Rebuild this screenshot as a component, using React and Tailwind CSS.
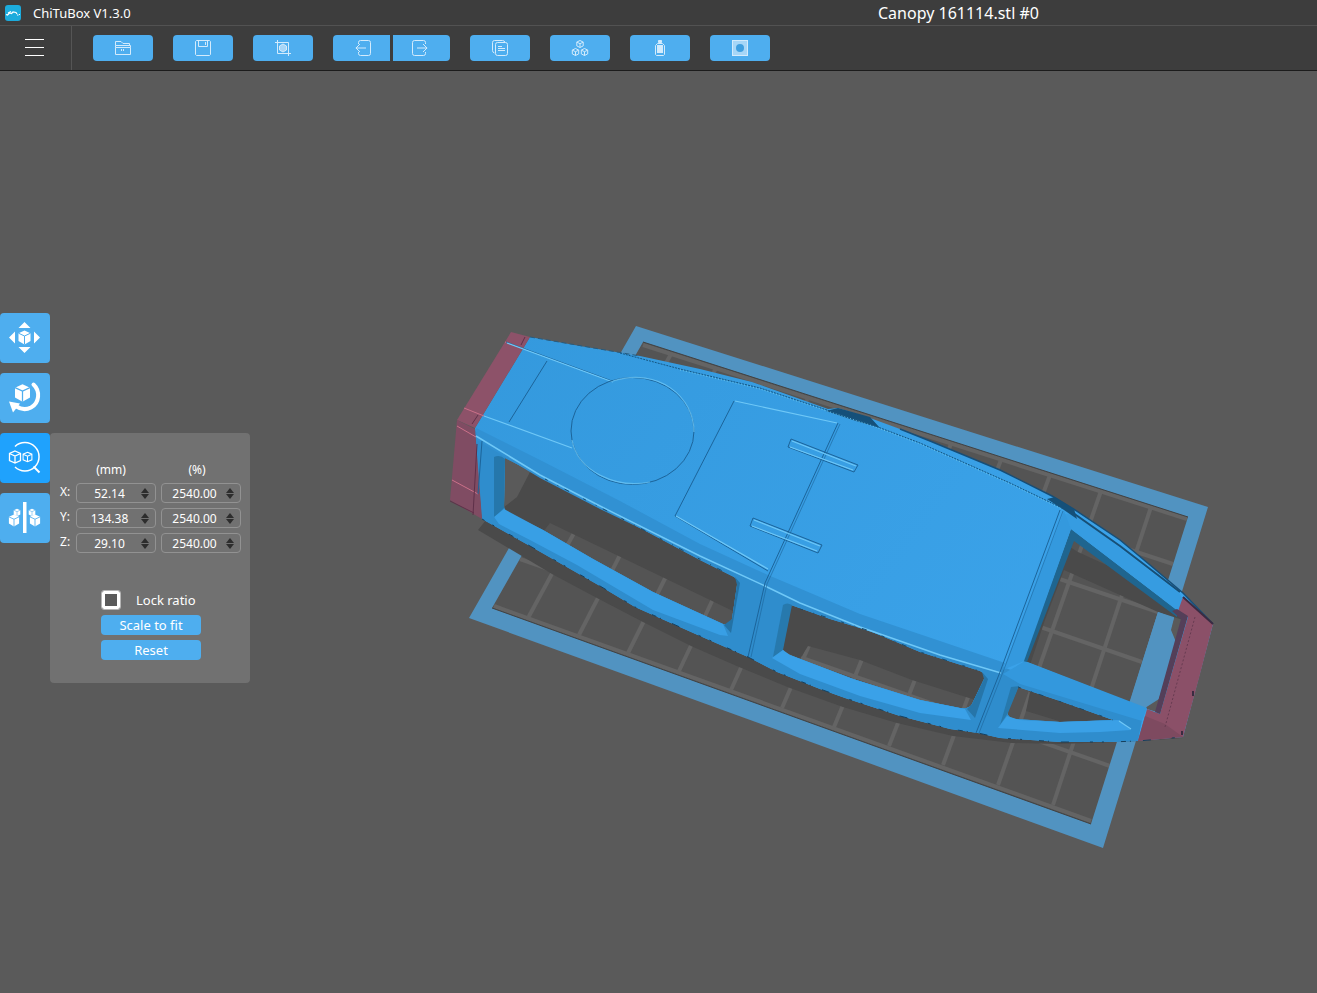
import React, { useState } from "react";

const line = { fill: "none", stroke: "#d3ebfc", strokeWidth: 1 };

function FolderIcon() {
  return (
    <svg width="18" height="16" viewBox="0 0 18 16" {...line} aria-hidden="true">
      <path d="M1.500 5.500V1.500H7l2 2h6.500v2M1.500 7.500V5.500h15v2M1.500 7.500v7h15v-7zM7.500 9v2M9.500 9v2" />
    </svg>
  );
}
function SaveIcon() {
  return (
    <svg width="16" height="16" viewBox="0 0 16 16" {...line} aria-hidden="true">
      <path d="M1.500 .5h13l1 1v13l-1 1h-13l-1-1v-13zM3.500 .5v6h9v-6M10.500 2v3" />
    </svg>
  );
}
function CropIcon() {
  return (
    <svg width="16" height="16" viewBox="0 0 16 16" {...line} aria-hidden="true">
      <path d="M0 2.500h13.500V16M2.500 0v13.500H16" />
      <path d="M8 4l3.500 2v4L8 12l-3.500-2V6z" fill="#a8d6f7" />
    </svg>
  );
}
function UndoIcon() {
  return (
    <svg width="16" height="16" viewBox="0 0 16 16" {...line} aria-hidden="true">
      <path d="M3.500 4V2.500q0-2 2-2h8q2 0 2 2v11q0 2-2 2h-8q-2 0-2-2V12M11 8H.8M5 4L1 8l4 4" />
    </svg>
  );
}
function RedoIcon() {
  return (
    <svg width="16" height="16" viewBox="0 0 16 16" {...line} aria-hidden="true">
      <path d="M13.500 4V2.500q0-2-2-2h-9q-2 0-2 2v11q0 2 2 2h9q2 0 2-2V12M5 8h10.200M11 4l4 4-4 4" />
    </svg>
  );
}
function CopyIcon() {
  return (
    <svg width="16" height="16" viewBox="0 0 16 16" {...line} aria-hidden="true">
      <rect x="3.500" y="2.500" width="12" height="13" rx="2" />
      <path d="M2.500 13Q.5 12.500 .5 10.500v-8q0-2 2-2h8q2 0 2.500 2M6 6.500h4M6 8.500h7M6 10.500h7" />
    </svg>
  );
}
function CubesIcon() {
  const c = "M0-3.500L3.200-1.900V1.900L0 3.500-3.200 1.900V-1.900zM-3.200-1.900L0-.3 3.200-1.900M0-.3V3.500";
  return (
    <svg width="18" height="16" viewBox="0 0 18 16" {...line} aria-hidden="true">
      <path d={c} transform="translate(9 4)" />
      <path d={c} transform="translate(4.500 12)" />
      <path d={c} transform="translate(13.500 12)" />
    </svg>
  );
}
function BottleIcon() {
  return (
    <svg width="12" height="16" viewBox="0 0 12 16" {...line} aria-hidden="true">
      <path d="M4.500 .5h3v2h-3z" fill="#d3ebfc" />
      <path d="M3.500 3.500h5l2 2v9l-1 1h-7l-1-1v-9z" />
      <path d="M3 5h6v8H3z" fill="#d3ebfc" stroke="none" />
    </svg>
  );
}
function DiscIcon() {
  return (
    <svg width="16" height="16" viewBox="0 0 16 16" aria-hidden="true">
      <rect x=".5" y=".5" width="15" height="15" fill="#a6d6f7" stroke="#d3ebfc" />
      <circle cx="8" cy="8" r="4" fill="#3f9fe0" />
    </svg>
  );
}

function ToolButton({ label, shape, children }) {
  return (
    <button type="button" aria-label={label} className={`flex h-[26px] items-center justify-center bg-[#4eaeef] ${shape}`}>
      {children}
    </button>
  );
}

function SolidCube({ x, y, s = 1 }) {
  return (
    <g transform={`translate(${x} ${y}) scale(${s})`}>
      <path d="M0-7L6-4.300V3.600L0 7-6 3.600V-4.300z" fill="#fff" />
      <path d="M-6-4.300L0-1.500 6-4.300M0-1.500V7" fill="none" stroke="#4eaeef" strokeWidth="1" />
    </g>
  );
}
function WireCube({ x, y, s = 1 }) {
  return (
    <path
      transform={`translate(${x} ${y}) scale(${s})`}
      d="M0-6L5.500-3.500V3.500L0 6-5.500 3.500V-3.500zM-5.500-3.500L0-1 5.500-3.500M0-1V6"
      fill="none"
      stroke="#fff"
      strokeWidth="1.300"
    />
  );
}
function MoveIcon() {
  return (
    <svg width="50" height="50" viewBox="0 0 50 50" aria-hidden="true">
      <path d="M24.500 9l6 6h-12zM24.500 40l6-6h-12zM9 24.500l6-6v12zM40 24.500l-6-6v12z" fill="#fff" />
      <SolidCube x={24.500} y={24.500} />
    </svg>
  );
}
function RotateIcon() {
  return (
    <svg width="50" height="50" viewBox="0 0 50 50" aria-hidden="true">
      <path d="M33.500 11.500C40.500 18 39.500 30 31 34.500c-5 2.500-10 2-14.500-1" fill="none" stroke="#fff" strokeWidth="4" strokeLinecap="round" />
      <path d="M9 28.500l11 2-7 9z" fill="#fff" />
      <SolidCube x={22.500} y={20} s={1.250} />
    </svg>
  );
}
function ScaleIcon() {
  return (
    <svg width="50" height="50" viewBox="0 0 50 50" aria-hidden="true">
      <path d="M15 13.500a14.200 14.200 0 1 1 0 20.500" fill="none" stroke="#fff" strokeWidth="1.500" />
      <path d="M33.500 33.500l6 6" stroke="#fff" strokeWidth="2" />
      <WireCube x={15} y={24} />
      <WireCube x={27.500} y={24} s={0.800} />
    </svg>
  );
}
function MirrorIcon() {
  return (
    <svg width="50" height="50" viewBox="0 0 50 50" aria-hidden="true">
      <rect x="23" y="9" width="3.500" height="31" fill="#fff" />
      <SolidCube x={17} y={19.500} s={0.550} />
      <SolidCube x={32} y={19.500} s={0.550} />
      <SolidCube x={14} y={27.500} s={0.850} />
      <SolidCube x={35} y={27.500} s={0.850} />
    </svg>
  );
}

const columns = [
  [671, 354, 528, 618], [716, 368, 579, 635], [762, 383, 628, 653], [808, 398, 679, 671],
  [855, 413, 731, 690], [903, 428, 782, 708], [951, 444, 834, 727], [1001, 460, 889, 746],
  [1050, 475, 943, 765], [1101, 491, 998, 785], [1151, 507, 1053, 805],
];
const rows = [
  [643, 345, 1187, 519], [620, 382, 1173, 564], [597, 424, 1158, 612], [572, 466, 1142, 662],
  [547, 512, 1126, 713], [520, 559, 1110, 766], [494, 606, 1091, 821],
];

const windowA = "M505 458L560 486L640 528L700 560L734 577Q738 580 737 585L732 619Q731 626 723 624L653 592L593 559L543 530L508 513Q504 510 504 506z";
const windowB = "M791 605L830 619L870 631L920 652L980 671Q986 674 984 679L972 704Q970 709 960 708L920 700L853 679L787 654Q782 652 783 646z";
const windowC = "M1018 687L1060 701L1113 720L1060 722L1015 719Q1006 717 1008 711z";
const windowD = "M1071 530L1178 611L1187 617L1160 713L1147 709L1024 661z";
const sideWindows = windowA + windowB + windowC;
const hull =
  "M530 337L580 346L640 356L700 369L752 382L828 409L838 408L870 418L900 429L930 441L1000 470L1052 496L1075 510L1120 540L1150 565L1183 593L1213 624L1183 737L1138 741L1110 742L1060 742L1000 738L978 733L950 729L900 716L845 698L820 689L777 672L748 657L700 636L635 607L600 586L530 546L482 519L475 428z";
const sideFace =
  "M475 431L540 468L620 509L700 552L765 583L860 622L940 649L1003 667L1142 720L1138 741L1110 742L1060 742L1000 738L978 733L950 729L900 716L845 698L820 689L777 672L748 657L700 636L635 607L600 586L530 546L482 519z";

function Scene() {
  const dark = { fill: "none", stroke: "#1c649a", strokeWidth: 1 };
  const glow = { fill: "none", stroke: "#6fc8f7", strokeWidth: 1.2 };
  return (
    <svg className="absolute inset-0 h-full w-full" viewBox="0 71 1317 922" role="img" aria-label="Canopy model on the build plate">
      <defs>
        <linearGradient id="roof" x1="0" y1="0" x2="1" y2=".4">
          <stop offset="0" stopColor="#3499dd" />
          <stop offset="1" stopColor="#3ba3ea" />
        </linearGradient>
        <clipPath id="plate"><path d="M643 342L1188 517L1091 824L492 608z" /></clipPath>
      </defs>

      <path d="M643 342L1188 517L1091 824L492 608z" fill="#545454" />
      <g stroke="#646464" strokeWidth="4" clipPath="url(#plate)">
        {[...columns, ...rows].map(([a, b, c, d]) => <path key={`${a}-${b}`} d={`M${a} ${b}L${c} ${d}`} />)}
      </g>
      <path fillRule="evenodd" fill="#5193c1" d="M636 326L1208 507L1103 848L469 618zM643 342L492 608L1091 824L1188 517z" />
      <path d="M492 608L1091 824M643 342L1188 517" stroke="#424242" strokeWidth="1" />

      <path fill="#4a4a4a" d="M490 515L478 530L552 574L597 598L643 622L691 646L739 667L790 688L843 707L897 723L953 736L1012 743L1060 744L1140 741L1183 738L1140 733L1060 736L1000 732L975 722L860 697L775 664L728 644L640 604L560 556z" />
      <path fill="#4a4a4a" d="M530 472L517 497L504 507L504 518L543 532L550 523L735 612L745 590L735 570L600 500z" />
      <path fill="#4a4a4a" d="M788 600L780 650L800 659L808 646L860 660L912 680L985 703L990 672L900 640z" />
      <path fill="#4a4a4a" d="M1018 685L1030 692L1026 711L1062 722L1116 722L1080 705z" />
      <path fill="#4a4a4a" d="M1070 547L1078 552L1135 578L1183 620L1158 612L1064 570L1045 620L1030 665L1020 661L1060 560z" />
      <path fill="#5193c1" d="M1158 612L1174 618L1171 630L1176 642L1159 699L1145 708L1130 702z" />

      <path fill="url(#roof)" fillRule="evenodd" d={hull + sideWindows + windowD} />
      <path fill="#2f8dcd" fillRule="evenodd" d={sideFace + sideWindows} />
      <path fill="#3191d3" d="M476 428L540 460L620 501L700 544L768 575L860 614L940 641L1005 663L1001 673L940 656L860 628L765 587L700 557L600 509L540 478L477 440z" />

      <path fill="#3398dd" d="M1025 661L1147 708L1142 721L1020 684L1003 674z" />
      <path fill="#1f658f" d="M1071 529L1178 611L1177 617L1074 541L1027 662L1023 661z" />
      <path fill="#2577ab" d="M494 457Q500 454 505 459L504 508L494 518z" />
      <path fill="#389fe5" d="M494 517L504 509L543 530L593 559L653 592L723 624L728 636L720 635L653 610L577 565L530 540L499 524z" />
      <path fill="#2472a5" d="M735 577L740 583L731 633L724 625L732 619L737 585z" />
      <path fill="#2779ad" d="M783 605Q787 602 792 605L783 650L773 657z" />
      <path fill="#3aa1e8" d="M772 658L783 650L790 655L853 679L920 700L965 709L971 720L920 713L860 696L800 674z" />
      <path fill="#2675a9" d="M982 672L988 679L975 718L967 709L972 704L984 679z" />
      <path fill="#2779ad" d="M1011 687L1019 686L1008 713L1000 725z" />
      <path fill="#3aa0e6" d="M998 728L1007 716L1020 720L1060 722L1119 720L1131 730L1100 732L1060 733z" />
      <path {...glow} d="M1119 721L1131 729" />

      <path fill="#369ce1" d="M1077 515L1180 594L1183 601L1178 611L1071 529L1064 514z" />
      <path fill="#3499de" d="M1064 511L1071 529L1024 661L1003 670z" />
      <path d="M1066 508L1120 546L1180 592" fill="none" stroke="#174f76" strokeWidth="2" />
      <path d="M900 429L930 441L1000 470L1052 496L1075 510L1120 540L1150 565L1183 593L1213 624" fill="none" stroke="#174e77" strokeWidth="1.500" />
      <path fill="#155079" d="M826 411L838 408L870 417L880 428L856 421zM1047 499L1055 497L1074 509L1077 519L1064 510z" />

      <path fill="#8d5269" d="M511 332L530 337L475 428L457 420z" />
      <path fill="#804c63" d="M457 420L475 429L482 519L450 500z" />
      <path fill="#8b5068" d="M1183 597L1213 624L1199 678L1183 737L1138 741L1147 709L1160 714L1188 617L1178 611z" />
      <path fill="#7e4a60" d="M1138 741L1145 716L1165 724L1183 737z" />
      <path fill="#543f59" d="M1177 609L1188 616L1160 714L1155 712L1181 619L1172 611z" />
      <path d="M505 342L525 349M464 408L484 416M457 426L476 437M452 480L478 494" stroke="#cb7089" strokeWidth="1" />
      <path d="M525 337L521 345M478 415L472 424M477 444L473 515M450 501L474 513" stroke="#5e3049" strokeWidth="1" />
      <path d="M1195 617L1165 727" stroke="#673b51" strokeDasharray="2 2" />
      <path d="M1183 597L1213 624M1193 691v5M1182 731v4" stroke="#3b2b41" strokeWidth="2" />

      <path d="M530 337L640 356" stroke="#265c80" strokeDasharray="5 3" fill="none" />
      <path d="M620 353L680 369L760 388L830 411L870 424L920 443L1010 483L1062 508" fill="none" stroke="#155783" strokeDasharray="2 1" />
      <path d="M680 370L760 389L830 412L870 425L920 444L1010 484L1062 509" fill="none" stroke="#68c3e9" strokeDasharray="1 2" />
      <path {...glow} strokeWidth="1.500" d="M476 436L540 475L600 506L700 556L765 586L800 603L860 627L940 655L1001 673" />
      <path {...dark} d="M506 342L612 381M547 361L509 422M734 401L675 516L768 571" />
      <path {...glow} d="M507 343L613 382M484 416L572 448M735 401L837 423M676 516L768 569" />
      <path {...dark} d="M838 423L765 583L748 657M1060 510L1000 672L976 733M482 441L478 494" />
      <path {...dark} opacity=".6" d="M840 424L767 584L751 657M1063 511L1003 672L979 733" />
      <ellipse cx="632.500" cy="431" rx="61.500" ry="53.500" {...dark} />
      <path {...glow} opacity=".75" d="M613 381C659 367 694 397 694 432M572 440C578 472 617 489 650 482" />
      <path {...dark} d="M791 439L858 465L854 472L788 447zM753 518L822 545L818 553L750 526z" />
      <path {...glow} d="M792 441L856 466M790 447L853 470M754 520L820 546M752 526L817 551" />
      <path d="M482 519L530 546L600 586L635 607L700 636L748 657L777 672L820 689L845 698L900 716L950 729L978 733L1000 738L1060 742L1110 742L1138 741L1183 737" fill="none" stroke="#173f5b" strokeWidth="1" strokeDasharray="3 9 2 17 5 4 1 12 8 21" />
      <path d="M545 479L640 528L734 577M800 609L870 631L920 652L980 671M1018 687L1113 720" fill="none" stroke="#184b6d" strokeDasharray="3 11 1 7 5 16" />
    </svg>
  );
}

function SpinField({ label, initial }) {
  const [value, setValue] = useState(initial);
  const step = (d) => setValue((v) => (Number(v) + d).toFixed(2));
  return (
    <div className="flex h-5 w-20 items-center rounded border border-[#929292]">
      <input
        type="text"
        aria-label={label}
        value={value}
        onChange={(e) => setValue(e.target.value)}
        className="h-full w-0 flex-1 bg-transparent pl-px text-center text-[12px] leading-4 text-white outline-none"
      />
      <div className="mr-1.5 flex flex-col gap-px">
        <button type="button" aria-label={`Increase ${label}`} onClick={() => step(1)}>
          <svg className="block" width="8" height="5" viewBox="0 0 8 5"><path d="M4 0l4 5H0z" fill="#2d2d2d" /></svg>
        </button>
        <button type="button" aria-label={`Decrease ${label}`} onClick={() => step(-1)}>
          <svg className="block" width="8" height="5" viewBox="0 0 8 5"><path d="M4 5l4-5H0z" fill="#2d2d2d" /></svg>
        </button>
      </div>
    </div>
  );
}

const axes = [["X", "52.14"], ["Y", "134.38"], ["Z", "29.10"]];
const modes = [["Move", MoveIcon], ["Rotate", RotateIcon], ["Scale", ScaleIcon], ["Mirror", MirrorIcon]];

function ScalePanel() {
  return (
    <section aria-label="Scale" className="mt-[362px] h-[250px] w-[200px] rounded bg-[#717171] pt-[29px] text-white">
      <div className="grid grid-cols-[11px_80px_80px] gap-[5px] pl-2.5 text-[12px] leading-4">
        <span />
        <span className="pr-2.5 text-center">(mm)</span>
        <span className="pr-2 text-center">(%)</span>
        {axes.map(([axis, mm]) => (
          <React.Fragment key={axis}>
            <span className="leading-[18px]">{axis}:</span>
            <SpinField label={`${axis} millimetres`} initial={mm} />
            <SpinField label={`${axis} percent`} initial="2540.00" />
          </React.Fragment>
        ))}
      </div>
      <div className="ml-[51px] mt-[37px] flex w-[100px] flex-col gap-[5px] text-[13px] leading-4">
        <label className="flex h-5 items-center gap-[15px] whitespace-nowrap">
          <input type="checkbox" className="h-5 w-5 appearance-none rounded-[3px] border border-[#b5b5b5] bg-[#5a5a5a] shadow-[inset_0_0_0_3px_white] checked:bg-[#4eaeef]" />
          Lock ratio
        </label>
        <button type="button" className="h-5 rounded bg-[#4eaeef]">Scale to fit</button>
        <button type="button" className="h-5 rounded bg-[#4eaeef]">Reset</button>
      </div>
    </section>
  );
}

export default function App() {
  const [mode, setMode] = useState("Scale");
  return (
    <div className="flex min-h-screen flex-col bg-[#5a5a5a] font-['Noto_Sans','Open_Sans',sans-serif] text-white">
      <header className="grid h-[25px] grid-cols-3 items-center bg-[#3d3d3d]">
        <div className="flex items-center gap-3 pl-[5px] text-[13px] leading-5">
          <svg width="16" height="16" viewBox="0 0 16 16" aria-hidden="true">
            <rect width="16" height="16" rx="3" fill="#1cabdc" />
            <path d="M1 9.500l1.500 .5 2-2 2 .5L8 7l3 .500 1 1.500M12 10h1.500M14 9.500h1M3 8l3-1.500" fill="none" stroke="#fff" strokeWidth="1.200" />
          </svg>
          ChiTuBox V1.3.0
        </div>
        <h1 className="col-start-3 whitespace-nowrap text-[16px] leading-5">Canopy 161114.stl #0</h1>
      </header>
      <nav aria-label="Toolbar" className="flex h-[46px] border-t border-b border-t-[#525252] border-b-[#1c1c1c] bg-[#3d3d3d]">
        <div className="flex w-[72px] items-center border-r border-[#555555] pb-px pl-[25px]">
          <button type="button" aria-label="Menu" className="flex flex-col gap-[7px]">
            <span className="h-px w-[19px] bg-white" />
            <span className="h-px w-[19px] bg-white" />
            <span className="h-px w-[19px] bg-white" />
          </button>
        </div>
        <div className="flex items-center gap-5 pl-[21px]">
          <ToolButton label="Open" shape="w-[60px] rounded"><FolderIcon /></ToolButton>
          <ToolButton label="Save" shape="w-[60px] rounded"><SaveIcon /></ToolButton>
          <ToolButton label="Screenshot" shape="w-[60px] rounded"><CropIcon /></ToolButton>
          <div className="flex gap-[3px]">
            <ToolButton label="Undo" shape="w-[57px] rounded-l pl-[3px]"><UndoIcon /></ToolButton>
            <ToolButton label="Redo" shape="w-[57px] rounded-r pr-[3px]"><RedoIcon /></ToolButton>
          </div>
          <ToolButton label="Copy" shape="w-[60px] rounded"><CopyIcon /></ToolButton>
          <ToolButton label="Auto layout" shape="w-[60px] rounded"><CubesIcon /></ToolButton>
          <ToolButton label="Hollow" shape="w-[60px] rounded"><BottleIcon /></ToolButton>
          <ToolButton label="Dig hole" shape="w-[60px] rounded"><DiscIcon /></ToolButton>
        </div>
      </nav>
      <main className="relative flex flex-1 items-start overflow-hidden">
        <Scene />
        <div className="relative flex items-start">
          <div className="flex flex-col gap-2.5 pt-[242px]">
            {modes.map(([name, Icon]) => (
              <button
                key={name}
                type="button"
                aria-label={name}
                aria-pressed={mode === name}
                onClick={() => setMode(name)}
                className={`h-[50px] w-[50px] rounded ${mode === name ? "bg-[#1fa2fd]" : "bg-[#4eaeef]"}`}
              >
                <Icon />
              </button>
            ))}
          </div>
          <ScalePanel />
        </div>
      </main>
    </div>
  );
}
